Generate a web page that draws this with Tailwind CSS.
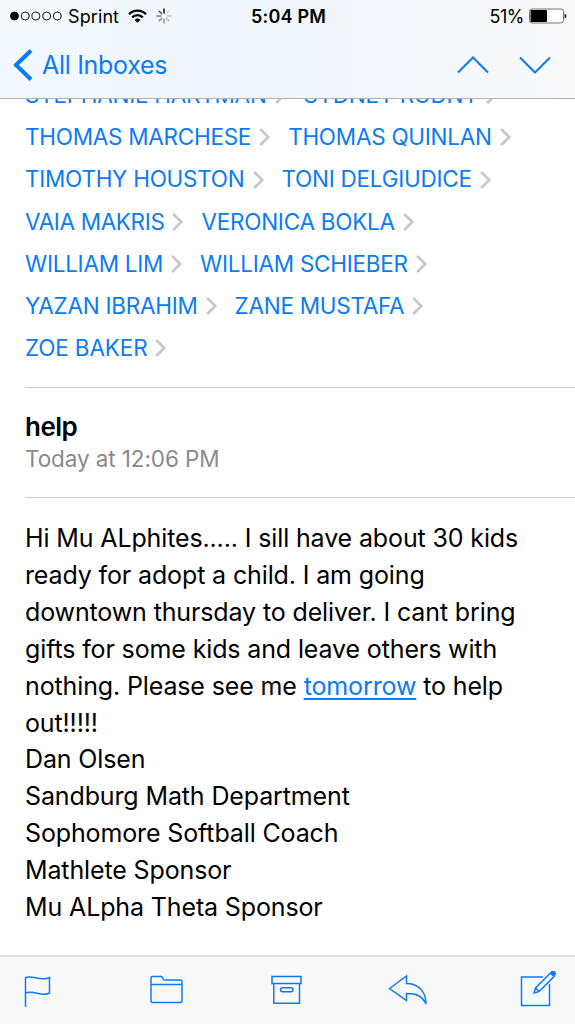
<!DOCTYPE html>
<html lang="en">
  <head>
    <meta charset="UTF-8" />
    <meta name="viewport" content="width=device-width, initial-scale=1.0" />
    <title>All Inboxes</title>
    <script src="https://cdn.jsdelivr.net/npm/@tailwindcss/browser@4"></script>
  </head>
  <body class="bg-white h-screen flex flex-col overflow-hidden font-['Inter',sans-serif] text-black">
    <svg class="hidden">
      <symbol id="chevron" viewBox="0 0 11 18">
        <path d="M1.2 1l8 8-8 8" fill="none" stroke="#c9c9cb" stroke-width="2.8" />
      </symbol>
    </svg>

    <header class="h-[99px] shrink-0 border-b border-[#b2b2b5] bg-linear-to-r from-[#f3f8fd] via-[#eff5fc] via-40% to-[#f9f9fa]">
      <!-- Status bar -->
      <div class="grid grid-cols-[1fr_auto_1fr] items-center h-8 pl-[10px] pr-2 text-[18px]">
        <div class="flex items-center">
          <svg class="w-[53px] h-[10px]" viewBox="0 0 53 10" fill="none" stroke="#000" stroke-width="0.9">
            <circle cx="4.5" cy="5" r="4" fill="#000" />
            <circle cx="15.2" cy="5" r="4" />
            <circle cx="25.9" cy="5" r="4" />
            <circle cx="36.6" cy="5" r="4" />
            <circle cx="47.3" cy="5" r="4" />
          </svg>
          <span class="ml-[5px] tracking-[0.1px]">Sprint</span>
          <svg class="ml-[9px] w-[19px] h-[14px]" viewBox="0 0 19 14" fill="none" stroke="#000" stroke-width="2.3">
            <path d="M1 5.2a12 12 0 0 1 17 0" />
            <path d="M4.2 8.4a7.5 7.5 0 0 1 10.6 0" />
            <path d="M9.5 13.8L6.6 10.9a4.1 4.1 0 0 1 5.8 0z" fill="#000" stroke="none" />
          </svg>
          <svg class="ml-[9px] w-4 h-4" viewBox="0 0 16 16" stroke-width="1.5">
            <path d="M8 .5v5" stroke="#111" />
            <path d="M13.300 2.700l-3.300 3.300" stroke="#ddd" />
            <path d="M15.500 8h-5" stroke="#c6c6c6" />
            <path d="M13.300 13.300l-3.300-3.300" stroke="#bbb" />
            <path d="M8 15.500v-5" stroke="#999" />
            <path d="M2.700 13.300l3.300-3.300" stroke="#888" />
            <path d="M.5 8h5" stroke="#777" />
            <path d="M2.700 2.700l3.300 3.300" stroke="#555" />
          </svg>
        </div>
        <div class="font-semibold tracking-[0.2px]">5:04 PM</div>
        <div class="flex items-center justify-end">
          <span class="tracking-[-0.5px]">51%</span>
          <svg class="ml-[5px] w-[38px] h-4" viewBox="0 0 38 16">
            <rect x="0.5" y="1" width="34" height="14" rx="2.5" fill="#fff" stroke="#777" />
            <rect x="1.5" y="2" width="16.5" height="12" rx="1" />
            <path d="M35.5 5.5q2 .5 2 2.5t-2 2.5z" fill="#333" />
          </svg>
        </div>
      </div>
      <!-- Navigation bar -->
      <div class="flex items-center h-[66px] pl-[13px] pr-6 text-[#0b7bf6]">
        <svg class="w-5 h-8" viewBox="0 0 20 32" fill="none" stroke="currentColor" stroke-width="4">
          <path d="M18 1.5L3 16l15 14.5" />
        </svg>
        <span class="ml-[9px] pt-px text-[25px] tracking-[-0.3px]">All Inboxes</span>
        <svg class="ml-auto w-8 h-[18px]" viewBox="0 0 32 18" fill="none" stroke="currentColor" stroke-width="2.1">
          <path d="M1 16.5L16 1.5l15 15" />
        </svg>
        <svg class="ml-[30px] w-8 h-[18px]" viewBox="0 0 32 18" fill="none" stroke="currentColor" stroke-width="2.1">
          <path d="M1 1.5l15 15 15-15" />
        </svg>
      </div>
    </header>

    <main class="flex-1 min-h-0 overflow-hidden pl-[25px]">
      <!-- Recipients, scrolled under the header -->
      <div class="-mt-[25px] text-[22.5px] leading-[42.2px] tracking-[-0.26px] text-[#0b7bf6] whitespace-nowrap">
        <div class="flex gap-[18px]">
          <div class="flex items-center gap-2">STEPHANIE HARTMAN<svg class="w-[11px] h-[18px]"><use href="#chevron" /></svg></div>
          <div class="flex items-center gap-2">SYDNEY RUDNY<svg class="w-[11px] h-[18px]"><use href="#chevron" /></svg></div>
        </div>
        <div class="flex gap-[18px]">
          <div class="flex items-center gap-2">THOMAS MARCHESE<svg class="w-[11px] h-[18px]"><use href="#chevron" /></svg></div>
          <div class="flex items-center gap-2">THOMAS QUINLAN<svg class="w-[11px] h-[18px]"><use href="#chevron" /></svg></div>
        </div>
        <div class="flex gap-[18px]">
          <div class="flex items-center gap-2">TIMOTHY HOUSTON<svg class="w-[11px] h-[18px]"><use href="#chevron" /></svg></div>
          <div class="flex items-center gap-2">TONI DELGIUDICE<svg class="w-[11px] h-[18px]"><use href="#chevron" /></svg></div>
        </div>
        <div class="flex gap-[18px]">
          <div class="flex items-center gap-2 tracking-[-0.35px]">VAIA MAKRIS<svg class="w-[11px] h-[18px]"><use href="#chevron" /></svg></div>
          <div class="flex items-center gap-2">VERONICA BOKLA<svg class="w-[11px] h-[18px]"><use href="#chevron" /></svg></div>
        </div>
        <div class="flex gap-[18px]">
          <div class="flex items-center gap-2">WILLIAM LIM<svg class="w-[11px] h-[18px]"><use href="#chevron" /></svg></div>
          <div class="flex items-center gap-2">WILLIAM SCHIEBER<svg class="w-[11px] h-[18px]"><use href="#chevron" /></svg></div>
        </div>
        <div class="flex gap-[18px]">
          <div class="flex items-center gap-2">YAZAN IBRAHIM<svg class="w-[11px] h-[18px]"><use href="#chevron" /></svg></div>
          <div class="flex items-center gap-2">ZANE MUSTAFA<svg class="w-[11px] h-[18px]"><use href="#chevron" /></svg></div>
        </div>
        <div class="flex items-center gap-2 tracking-[-0.15px]">ZOE BAKER<svg class="w-[11px] h-[18px]"><use href="#chevron" /></svg></div>
      </div>

      <!-- Subject -->
      <div class="mt-[17.6px] h-[111px] border-y border-[#cfcfd1] pt-[23px]">
        <h1 class="text-[26px] leading-8 font-semibold tracking-[-0.5px]">help</h1>
        <p class="text-[22.5px] leading-8 tracking-[-0.1px] text-[#8a8a8c]">Today at 12:06 PM</p>
      </div>

      <!-- Message -->
      <div class="mt-[22.2px] text-[25px] leading-[36.86px] tracking-[-0.13px] whitespace-nowrap">
        <p>Hi Mu ALphites..... I sill have about 30 kids</p>
        <p>ready for adopt a child. I am going</p>
        <p>downtown thursday to deliver. I cant bring</p>
        <p>gifts for some kids and leave others with</p>
        <p>nothing. Please see me <a class="text-[#0b7bf6] underline decoration-2 underline-offset-[3px]" href="#">tomorrow</a> to help</p>
        <p>out!!!!!</p>
        <p>Dan Olsen</p>
        <p>Sandburg Math Department</p>
        <p>Sophomore Softball Coach</p>
        <p>Mathlete Sponsor</p>
        <p>Mu ALpha Theta Sponsor</p>
      </div>
    </main>

    <footer class="h-[69px] shrink-0 flex items-center border-t-2 border-[#dcdcdc] bg-[#f9f9f9] pl-6 pr-[19px] text-[#0b7bf6]">
      <svg class="w-[27px] h-10" viewBox="0 0 27 40" fill="none" stroke="currentColor" stroke-width="1.5">
        <path d="M1.5 36V6.5C9 3.5 16 11 25.5 6.5V22C17 26.5 10 18.5 1.5 22" />
      </svg>
      <svg class="ml-[99px] w-[33px] h-10" viewBox="0 0 33 40" fill="none" stroke="currentColor" stroke-width="1.5">
        <path d="M1 13.5V7q0-1.5 1.5-1.5H11q1 0 1.5 1l.5 1q.5 1.500 2 1.500h15.500Q32 9 32 10.500V30q0 1.500-1.500 1.500h-28Q1 31.500 1 30V13.500h31" />
      </svg>
      <svg class="ml-[87px] w-8 h-10" viewBox="0 0 32 40" fill="none" stroke="currentColor" stroke-width="1.5">
        <path d="M2 5.5h29v7H2zM3.800 12.500v19.800h25.700V12.500" />
        <rect x="10.5" y="16.7" width="12.5" height="4" rx="2" />
      </svg>
      <svg class="ml-[86px] w-10 h-10" viewBox="0 0 40 40" fill="none" stroke="currentColor" stroke-width="1.5">
        <path d="M1.500 17.500L18.500 5v7.500C29 12.500 38 19 38 33 34 25 29 22.500 18.500 22.500v7z" />
      </svg>
      <svg class="ml-auto w-9 h-10" viewBox="0 0 36 40" fill="none" stroke="currentColor" stroke-width="1.5">
        <path d="M23 6H1.500v28.500h28V13" />
        <path d="M14 22l1.500-5L30.500 2l3.500 3.500-15 15z M16 17.500l2.500 2.500" />
        <path d="M31 1.500l1-1q1-1 2.500.5t.5 2.500l-1 1z" fill="currentColor" />
      </svg>
    </footer>
  </body>
</html>
